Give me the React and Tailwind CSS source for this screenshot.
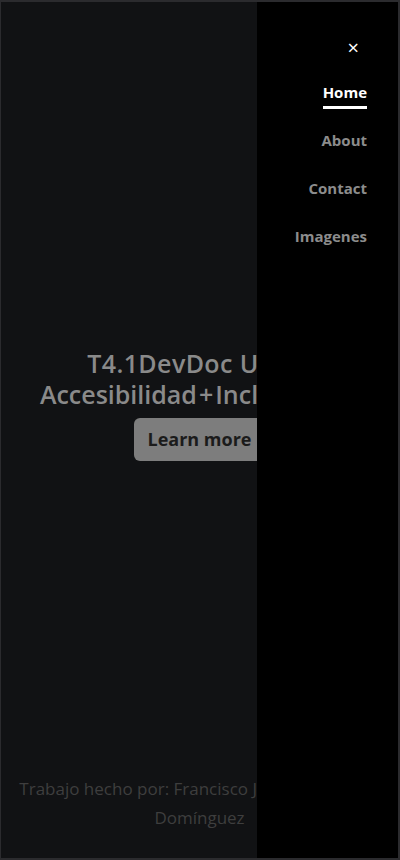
import React from "react";

export default function App() {
  const font = { fontFamily: '"Open Sans", "Noto Sans", sans-serif' };
  return (
    <div
      className="relative w-[400px] h-[860px] overflow-hidden bg-[#111214] border-t-2 border-r-2 border-b-2 border-l border-[#2b2b2e]"
      style={font}
    >
      <div className="flex flex-col h-full">
        <div className="flex flex-col items-center pt-[346px]">
          <h1 className="text-center text-[25px] leading-[31px] font-semibold text-[#8a8a8a] px-4">
            <span className="block tracking-[0.4px]">T4.1DevDoc UX/UI</span>
            <span className="block">
              Accesibilidad<span className="mx-[2px]">+</span>Inclusividad
            </span>
          </h1>
          <button className="mt-[8px] h-[43px] w-[132px] rounded-[6px] bg-[#7d7d7d] text-[#1b1b1b] text-[18px] font-bold">
            Learn more
          </button>
        </div>
        <footer className="mt-auto pb-[26px] px-[16px] text-center text-[17px] leading-[29px] text-[#3e3e3e]">
          Trabajo hecho por: Francisco Javier Rodríguez Domínguez
        </footer>
      </div>

      <nav className="absolute top-0 right-0 h-full w-[141px] bg-black flex flex-col items-end pr-[31px]">
        <button className="mt-[34px] mr-[8px] text-white text-[20px] leading-[24px]">×</button>
        <ul className="mt-[21px] flex flex-col items-end gap-[26px] text-[15px] font-bold leading-[22px]">
          <li className="flex flex-col items-end">
            <span className="text-white">Home</span>
            <span className="mt-[3px] h-[3px] w-full bg-white"></span>
          </li>
          <li className="text-[#8c8c8c] mt-[-6px]">About</li>
          <li className="text-[#8c8c8c]">Contact</li>
          <li className="text-[#8c8c8c]">Imagenes</li>
        </ul>
      </nav>
    </div>
  );
}
